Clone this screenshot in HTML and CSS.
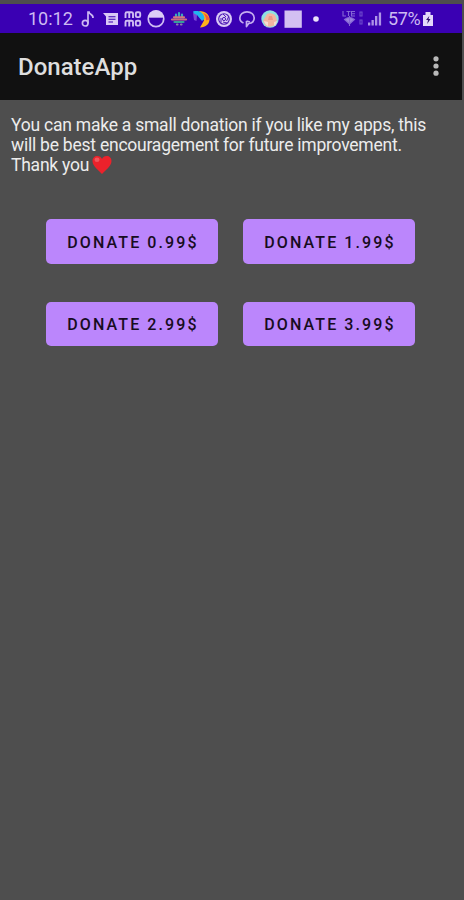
FILE: index.html
```html
<!DOCTYPE html>
<html lang="en">
<head>
    <meta charset="UTF-8">
    <meta name="viewport" content="width=device-width, initial-scale=1.0">
    <title>DonateApp</title>
    <link rel="stylesheet" href="styles.css">
</head>
<body>
    <div class="status-bar">
        <span class="time">10:12</span>
        <div class="icons">
            <!-- music note -->
            <svg viewBox="0 0 18 18" fill="none" stroke="#cdb9f2" stroke-width="1.7">
                <circle cx="7.2" cy="13.2" r="2.8"/>
                <path d="M10 13.500V2h1c0 2.500 4.500 2 4 6"/>
            </svg>
            <!-- messages -->
            <svg viewBox="0 0 18 18">
                <path d="M2 3h15v12H5V6.500z" fill="#d9c9f6"/>
                <path d="M7.500 6.700h7M7.500 9.300h7M7.500 12h4.500" stroke="#3a00b0" stroke-width="1.100"/>
            </svg>
            <!-- momo -->
            <svg viewBox="0 0 18 18" fill="none" stroke="#d0bdf3" stroke-width="1.900">
                <path d="M1.500 8V3.500Q1.500 2.300 3 2.300H7.500Q9 2.300 9 3.500V8M5.250 3v5"/>
                <rect x="11.800" y="2.300" width="4.400" height="4.800" rx="1.300"/>
                <path d="M1.500 16.500V12Q1.500 10.800 3 10.800H7.500Q9 10.800 9 12V16.500M5.250 11.500v5"/>
                <rect x="11.800" y="10.800" width="4.400" height="4.800" rx="1.300"/>
            </svg>
            <!-- half circle -->
            <svg viewBox="0 0 18 18">
                <circle cx="9" cy="9" r="7.700" fill="none" stroke="#d0bdf3" stroke-width="1.800"/>
                <path d="M1 8a8 8 0 0 1 16 0z" fill="#dccdf7"/>
                <path d="M2 8.200h14" stroke="#3a00b0" stroke-width="1"/>
            </svg>
            <!-- cluster -->
            <svg viewBox="0 0 18 18" stroke-width="2.200" stroke-linecap="round">
                <path d="M6 4.500v2M9 3v3M12 4.500v2" stroke="#3aa9bd"/>
                <path d="M4 7.300h10" stroke="#d5787c"/>
                <path d="M2 9.500h14" stroke="#c9707e"/>
                <path d="M4.500 12h9" stroke="#369f9c"/>
                <path d="M7 14.500h.5M11 14.500h.5" stroke="#8f7fa8"/>
            </svg>
            <!-- colored arrow -->
            <svg viewBox="0 0 18 18">
                <path d="M7 1c7 0 10.500 4 10.500 8.500S14 17 8 17.500l4-7z" fill="#ffb21b"/>
                <path d="M11 3c4 1.500 6.500 4 6.500 6.500l-3.500 1C14 7 13 5 11 3z" fill="#f65a36"/>
                <path d="M1 1.500c6-1.500 11 1 11.500 7L10 11 5 5 2.500 6z" fill="#21b5ee"/>
                <path d="M1 3l4 2-.5 6L2 10z" fill="#7946d8"/>
            </svg>
            <!-- shutter -->
            <svg viewBox="0 0 18 18" fill="none">
                <circle cx="9" cy="9" r="8" fill="#dac9f6"/>
                <circle cx="9" cy="9" r="5.300" stroke="#4d1bb5" stroke-width="1.100"/>
                <circle cx="9" cy="9" r="1.600" stroke="#4d1bb5"/>
                <path d="M8 4l3 3M13.500 7l-2 4M12 13l-4-1M6 12.500V8" stroke="#4d1bb5"/>
            </svg>
            <!-- chat bubble -->
            <svg viewBox="0 0 18 18" fill="none" stroke="#c4acef" stroke-width="1.700" stroke-linejoin="round">
                <path d="M5.500 13C3 12 1.800 10.500 1.800 8c0-3.500 3-6.200 7.200-6.200s7.200 2.700 7.200 6.200-3 5.200-5.500 5.500L8.500 16.500V11"/>
                <path d="M8.500 11l3.500 1"/>
            </svg>
            <!-- avatar -->
            <svg viewBox="0 0 18 18">
                <circle cx="9" cy="9" r="8.700" fill="#8fdfe2"/>
                <path d="M6 4q4-2 8 1l2 5-2 5q-4 3-9 1l-3-5z" fill="#f2b5a2"/>
                <path d="M8 6h3l1 4H7z" fill="#ea9686"/>
                <path d="M3 11l4 1v4q-3-1-4-5zM13 12l3-1q0 3-3 5z" fill="#f8ddd0"/>
            </svg>
            <!-- square -->
            <svg viewBox="0 0 18 18">
                <rect x=".5" y=".5" width="17.300" height="17.300" fill="#d3c0f2"/>
            </svg>
            <!-- dot -->
            <svg viewBox="0 0 18 18">
                <circle cx="9" cy="9" r="2.800" fill="#ebe1fb"/>
            </svg>
        </div>
        <div class="system">
            <!-- network type -->
            <svg class="network" viewBox="0 0 22 18" fill="none" stroke="#8567d5" stroke-width="1.100">
                <path d="M1 1v5h3M4.500 1.500h4M6.500 1.500V6M13 1.500H9.500V6H13M9.500 3.700H13"/>
                <path d="M2.500 9.500q5-4 10 0L7.500 14z" fill="#9d82df"/>
                <path d="M7.500 6v10"/>
                <path d="M18 2h2v4h-2zM18 10h2v4h-2z" stroke="#6f4ccd"/>
            </svg>
            <!-- signal -->
            <svg class="signal" viewBox="0 0 16 18" fill="#ae94e7">
                <rect x="1" y="12.500" width="2.300" height="3"/>
                <rect x="4.500" y="10" width="2.300" height="5.500"/>
                <rect x="8" y="6" width="2.300" height="9.500"/>
                <rect x="11.800" y="2.500" width="2.300" height="13"/>
            </svg>
            <span class="battery-level">57%</span>
            <!-- battery -->
            <svg class="battery" viewBox="0 0 12 18">
                <path d="M3.500 5V2h5v3H11v11H1V5z" fill="#e4d8fa"/>
                <path d="M7.300 6L4 10h2l-.8 4L8.500 9H6.500z" fill="#30106f"/>
            </svg>
        </div>
    </div>

    <div class="app-bar">
        <h1>DonateApp</h1>
        <svg class="menu" viewBox="0 0 6 20" fill="#b9b9b9">
            <circle cx="3" cy="2.800" r="2.600"/>
            <circle cx="3" cy="10" r="2.600"/>
            <circle cx="3" cy="17.200" r="2.600"/>
        </svg>
    </div>

    <div class="content">
        <p class="message">
            You can make a small donation if you like my apps, this<br>
            will be best encouragement for future improvement.<br>
            Thank you
            <svg class="heart" viewBox="0 0 20 20">
                <path d="M10 19C7 15.500.5 11.500.5 6 .5 3 2.500 1 5.300 1 7.500 1 9.200 2.300 10 4c.8-1.700 2.500-3 4.700-3 2.800 0 4.800 2 4.800 5C19.500 11.500 13 15.500 10 19z" fill="#ec222b"/>
                <ellipse cx="5" cy="4.700" rx="2.500" ry="2.200" fill="#f0555b"/>
            </svg>
        </p>
        <div class="buttons">
            <button>DONATE 0.99$</button>
            <button>DONATE 1.99$</button>
            <button>DONATE 2.99$</button>
            <button>DONATE 3.99$</button>
        </div>
    </div>
</body>
</html>
```
FILE: styles.css
```css
* {
    margin: 0;
    padding: 0;
    box-sizing: border-box;
}

body {
    font-family: Roboto, "Liberation Sans", sans-serif;
    height: 900px;
    padding: 4px 2px 0 0;
    background-color: #4e4e4e;
    overflow: hidden;
}

.status-bar {
    display: flex;
    align-items: center;
    height: 29px;
    padding-left: 28px;
    background: #3a00b3;
    color: #cdbaf2;
}

.time {
    width: 50px;
    font-size: 18px;
}

.icons {
    display: flex;
    gap: 4.9px;
}

.icons svg {
    width: 18px;
    height: 18px;
}

.system {
    display: flex;
    align-items: center;
    margin-left: 17px;
}

.network {
    width: 22px;
    height: 18px;
}

.signal {
    width: 16px;
    height: 18px;
    margin-left: 3px;
}

.battery-level {
    width: 34px;
    margin-left: 5px;
    font-size: 18px;
    letter-spacing: -0.3px;
}

.battery {
    width: 12px;
    height: 18px;
}

.app-bar {
    display: flex;
    justify-content: space-between;
    align-items: center;
    height: 67px;
    padding: 0 23px 0 18px;
    background: #111;
}

h1 {
    padding-top: 1px;
    color: #dedede;
    font-size: 24px;
    font-weight: 500;
}

.menu {
    width: 6px;
    height: 20px;
    margin-bottom: 1px;
}

.content {
    padding: 15px 11px;
}

.message {
    height: 60px;
    color: #ececec;
    font-size: 17.5px;
    line-height: 20px;
    letter-spacing: -0.23px;
    white-space: nowrap;
}

.heart {
    width: 20px;
    height: 20px;
    margin-left: -1px;
    vertical-align: top;
}

.buttons {
    display: grid;
    grid-template-columns: 172px 172px;
    gap: 38px 25px;
    margin: 44px 0 0 35px;
}

button {
    height: 44.5px;
    padding: 2px 0 0 2px;
    border: none;
    border-radius: 5px;
    background: #bb86fc;
    color: #170c22;
    font-family: inherit;
    font-size: 16px;
    font-weight: 500;
    letter-spacing: 2.1px;
    cursor: pointer;
}
```
